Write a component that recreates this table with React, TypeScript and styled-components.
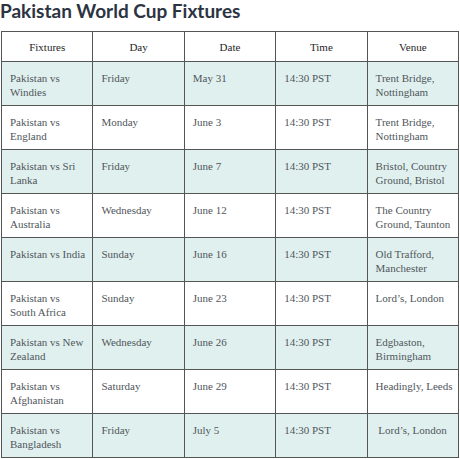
import React from "react";
import styled, { createGlobalStyle } from "styled-components";

const GlobalStyle = createGlobalStyle`
  html, body {
    margin: 0;
    padding: 0;
    background: #ffffff;
  }
`;

type Fixture = {
  fixture: string;
  day: string;
  date: string;
  time: string;
  venue: string;
};

const fixtures: Fixture[] = [
  { fixture: "Pakistan vs Windies", day: "Friday", date: "May 31", time: "14:30 PST", venue: "Trent Bridge, Nottingham" },
  { fixture: "Pakistan vs England", day: "Monday", date: "June 3", time: "14:30 PST", venue: "Trent Bridge, Nottingham" },
  { fixture: "Pakistan vs Sri Lanka", day: "Friday", date: "June 7", time: "14:30 PST", venue: "Bristol, Country Ground, Bristol" },
  { fixture: "Pakistan vs Australia", day: "Wednesday", date: "June 12", time: "14:30 PST", venue: "The Country Ground, Taunton" },
  { fixture: "Pakistan vs India", day: "Sunday", date: "June 16", time: "14:30 PST", venue: "Old Trafford, Manchester" },
  { fixture: "Pakistan vs South Africa", day: "Sunday", date: "June 23", time: "14:30 PST", venue: "Lord’s, London" },
  { fixture: "Pakistan vs New Zealand", day: "Wednesday", date: "June 26", time: "14:30 PST", venue: "Edgbaston, Birmingham" },
  { fixture: "Pakistan vs Afghanistan", day: "Saturday", date: "June 29", time: "14:30 PST", venue: "Headingly, Leeds" },
  { fixture: "Pakistan vs Bangladesh", day: "Friday", date: "July 5", time: "14:30 PST", venue: "\u00a0Lord’s, London" },
];

const App = () => {
  return (
    <Page>
      <GlobalStyle />
      <Title>Pakistan World Cup Fixtures</Title>
      <Table>
        <thead>
          <tr>
            <HeadCell>Fixtures</HeadCell>
            <HeadCell>Day</HeadCell>
            <HeadCell>Date</HeadCell>
            <HeadCell>Time</HeadCell>
            <HeadCell>Venue</HeadCell>
          </tr>
        </thead>
        <tbody>
          {fixtures.map((f, i) => (
            <Row key={i} $striped={i % 2 === 0}>
              <Cell>{f.fixture}</Cell>
              <Cell>{f.day}</Cell>
              <Cell>{f.date}</Cell>
              <Cell>{f.time}</Cell>
              <Cell>{f.venue}</Cell>
            </Row>
          ))}
        </tbody>
      </Table>
    </Page>
  );
};

export default App;

const Page = styled.div`
  width: 460px;
  padding: 0 0 0 1px;
  box-sizing: border-box;
`;

const Title = styled.h2`
  margin: 0 0 0 -1px;
  height: 31px;
  font-family: "Lato", "Liberation Sans", sans-serif;
  font-weight: 700;
  font-size: 19px;
  line-height: 22px;
  color: #2c3442;
`;

const Table = styled.table`
  width: 458px;
  border-collapse: collapse;
  table-layout: fixed;
  border: 1px solid #555555;
  font-family: "Liberation Serif", "DejaVu Serif", serif;
  font-size: 11px;
`;

const HeadCell = styled.th`
  height: 30px;
  box-sizing: border-box;
  padding: 0 4px;
  border: 1px solid #555555;
  font-weight: 400;
  color: #262626;
  text-align: center;
  vertical-align: middle;
  background: #ffffff;
`;

const Row = styled.tr<{ $striped: boolean }>`
  background: ${(p) => (p.$striped ? "#e0f0ef" : "#ffffff")};
`;

const Cell = styled.td`
  height: 44px;
  box-sizing: border-box;
  padding: 9px 5px 0 8px;
  border: 1px solid #555555;
  color: #50565b;
  line-height: 14px;
  vertical-align: top;
  text-align: left;
`;
